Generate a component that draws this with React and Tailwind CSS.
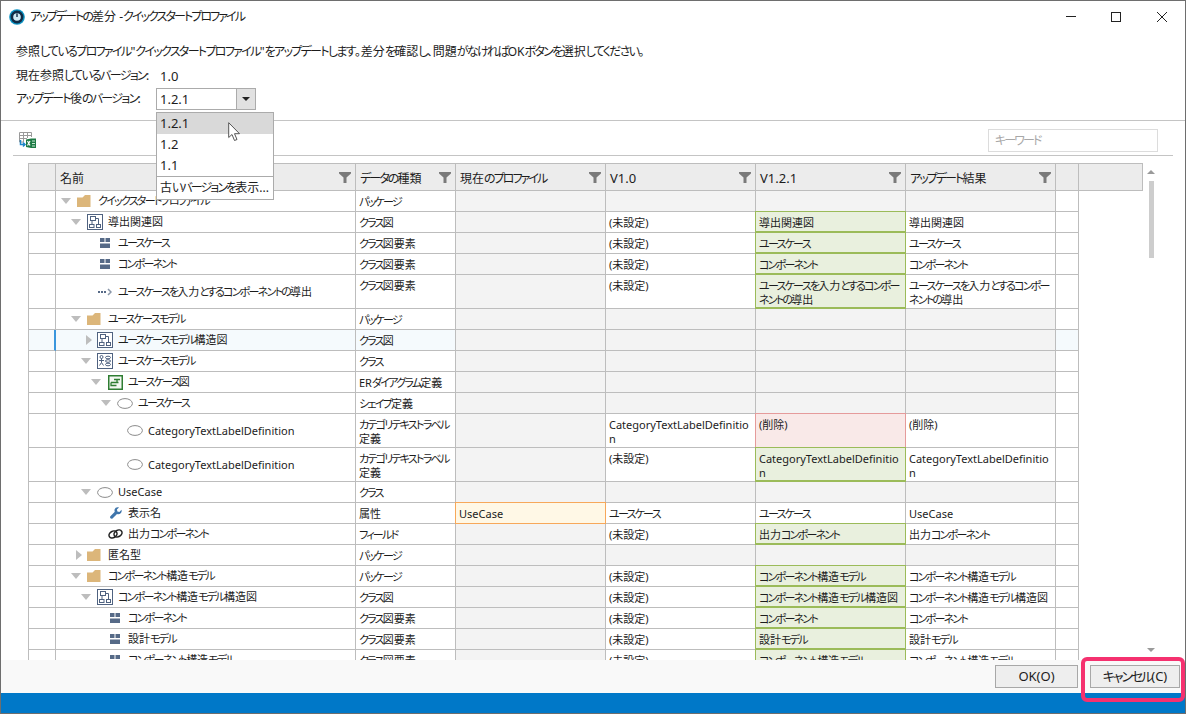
const COLS = ['w-[100px]', 'w-[150px]', 'w-[150px]', 'w-[150px]', 'w-[150px]'];

const INDENT = [
  'pl-[5px]',
  'pl-[15px]',
  'pl-[25px]',
  'pl-[35px]',
  'pl-[45px]',
  'pl-[55px]',
];

const UNSET = '(未設定)';
const CTLD = 'CategoryTextLabelDefinition';
const CTLD_WRAP = 'CategoryTextLabelDefinitio\nn';
const UC_LONG = 'ユースケースを入力とするコンポー\nネントの導出';

const g = (t) => ({ t, k: 'green' });

const ROWS = [
  { level: 0, arrow: 'down', icon: 'folder', name: 'クイックスタートプロファイル', type: 'パッケージ' },
  { level: 1, arrow: 'down', icon: 'diagram', name: '導出関連図', type: 'クラス図', v10: UNSET, v121: g('導出関連図'), res: '導出関連図' },
  { level: 2, icon: 'block', name: 'ユースケース', type: 'クラス図要素', v10: UNSET, v121: g('ユースケース'), res: 'ユースケース' },
  { level: 2, icon: 'block', name: 'コンポーネント', type: 'クラス図要素', v10: UNSET, v121: g('コンポーネント'), res: 'コンポーネント' },
  { level: 2, icon: 'dots', tall: true, name: 'ユースケースを入力とするコンポーネントの導出', type: 'クラス図要素', v10: UNSET, v121: g(UC_LONG), res: UC_LONG },
  { level: 1, arrow: 'down', icon: 'folder', name: 'ユースケースモデル', type: 'パッケージ' },
  { level: 2, arrow: 'right', icon: 'diagram', name: 'ユースケースモデル構造図', type: 'クラス図', selected: true },
  { level: 2, arrow: 'down', icon: 'classbox', name: 'ユースケースモデル', type: 'クラス' },
  { level: 3, arrow: 'down', icon: 'er', name: 'ユースケース図', type: 'ERダイアグラム定義' },
  { level: 4, arrow: 'down', icon: 'ellipse', name: 'ユースケース', type: 'シェイプ定義' },
  { level: 5, icon: 'ellipse', tall: true, name: CTLD, type: 'カテゴリテキストラベル\n定義', v10: CTLD_WRAP, v121: { t: '(削除)', k: 'red' }, res: '(削除)' },
  { level: 5, icon: 'ellipse', tall: true, name: CTLD, type: 'カテゴリテキストラベル\n定義', v10: UNSET, v121: g(CTLD_WRAP), res: CTLD_WRAP },
  { level: 2, arrow: 'down', icon: 'ellipse', name: 'UseCase', type: 'クラス' },
  { level: 3, icon: 'wrench', name: '表示名', type: '属性', cur: { t: 'UseCase', k: 'orange' }, v10: 'ユースケース', v121: 'ユースケース', res: 'UseCase' },
  { level: 3, icon: 'link', name: '出力コンポーネント', type: 'フィールド', v10: UNSET, v121: g('出力コンポーネント'), res: '出力コンポーネント' },
  { level: 1, arrow: 'right', icon: 'folder', name: '匿名型', type: 'パッケージ' },
  { level: 1, arrow: 'down', icon: 'folder', name: 'コンポーネント構造モデル', type: 'パッケージ', v10: UNSET, v121: g('コンポーネント構造モデル'), res: 'コンポーネント構造モデル' },
  { level: 2, arrow: 'down', icon: 'diagram', name: 'コンポーネント構造モデル構造図', type: 'クラス図', v10: UNSET, v121: g('コンポーネント構造モデル構造図'), res: 'コンポーネント構造モデル構造図' },
  { level: 3, icon: 'block', name: 'コンポーネント', type: 'クラス図要素', v10: UNSET, v121: g('コンポーネント'), res: 'コンポーネント' },
  { level: 3, icon: 'block', name: '設計モデル', type: 'クラス図要素', v10: UNSET, v121: g('設計モデル'), res: '設計モデル' },
  { level: 3, icon: 'block', name: 'コンポーネント構造モデル', type: 'クラス図要素', v10: UNSET, v121: g('コンポーネント構造モデル'), res: 'コンポーネント構造モデル' },
];

// the original UI font has narrow kana, so tighten only the kana runs
function Jp({ text, loose }) {
  return text.split(/([\u3040-\u30FF]+)/).map((part, i) =>
    i % 2 === 1 ? (
      <span key={i} className={loose ? 'tracking-[-0.14em]' : 'tracking-[-0.16em]'}>{part}</span>
    ) : (
      part
    )
  );
}

function Funnel() {
  return (
    <svg width="12" height="11" viewBox="0 0 12 11" className="shrink-0">
      <path d="M0 0H12V1.5L7.5 5.5V11H4.5V5.5L0 1.5Z" fill="#7a7a7a" />
    </svg>
  );
}

function TreeArrow({ dir }) {
  if (dir === 'down') {
    return (
      <svg width="10" height="6" viewBox="0 0 10 6">
        <path d="M0 0H10L5 6Z" fill="#bdbdbd" />
      </svg>
    );
  }
  return (
    <svg width="6" height="10" viewBox="0 0 6 10" className="ml-[5px]">
      <path d="M0 0L6 5L0 10Z" fill="#bdbdbd" />
    </svg>
  );
}

function TreeIcon({ name }) {
  if (name === 'folder') {
    return (
      <svg width="14" height="12" viewBox="0 0 14 12" className="-ml-px">
        <path d="M0 2.5H5.5L8 0H13.5V12H0Z" fill="#dcb67a" />
      </svg>
    );
  }
  if (name === 'diagram') {
    return (
      <svg width="16" height="16" viewBox="0 0 16 16" className="-ml-px">
        <rect x="0.5" y="0.5" width="15" height="15" fill="#fff" stroke="#4f6280" />
        <rect x="3.5" y="2.5" width="5" height="4" fill="none" stroke="#4f6280" />
        <rect x="2.5" y="10.5" width="4.5" height="3" fill="none" stroke="#4f6280" />
        <rect x="9.5" y="10.5" width="4" height="3" fill="none" stroke="#4f6280" />
        <path d="M5 6.5V10.5M8.5 4.5H11.5V10.5" fill="none" stroke="#4f6280" />
      </svg>
    );
  }
  if (name === 'classbox') {
    return (
      <svg width="16" height="16" viewBox="0 0 16 16" className="-ml-px">
        <rect x="0.5" y="0.5" width="15" height="15" fill="#fff" stroke="#4f6280" />
        <circle cx="4.5" cy="4" r="1.5" fill="none" stroke="#4f6280" />
        <path d="M2 7.5H7M4.5 5.5V9.5M2.5 12.5L4.5 9.5L6.5 12.5" fill="none" stroke="#4f6280" />
        <ellipse cx="11" cy="4.5" rx="2.5" ry="1.3" fill="none" stroke="#4f6280" />
        <ellipse cx="11" cy="8" rx="2.5" ry="1.3" fill="none" stroke="#4f6280" />
        <ellipse cx="11" cy="11.5" rx="2.5" ry="1.3" fill="none" stroke="#4f6280" />
      </svg>
    );
  }
  if (name === 'er') {
    return (
      <svg width="15" height="15" viewBox="0 0 15 15">
        <rect x="0.75" y="0.75" width="13.5" height="13.5" fill="#f4f8f2" stroke="#2f7d32" strokeWidth="1.5" />
        <path d="M6 4.5H12M9 4.5V7.5M3 7.5H10.5M3 7.5V10.5H8.5" fill="none" stroke="#2f7d32" strokeWidth="1.3" />
      </svg>
    );
  }
  if (name === 'block') {
    return (
      <svg width="10" height="10" viewBox="0 0 10 10" className="ml-[2px]">
        <path d="M0 0H4.5V4H0ZM5.5 0H10V4H5.5ZM0 5.5H10V10H0Z" fill="#566a87" />
      </svg>
    );
  }
  if (name === 'dots') {
    return (
      <svg width="14" height="8" viewBox="0 0 14 8">
        <path d="M0 3H2V5H0ZM3 3H5V5H3ZM6 3H8V5H6Z" fill="#566a87" />
        <path d="M10 1L13 4L10 7" fill="none" stroke="#8a97aa" strokeWidth="1.5" />
      </svg>
    );
  }
  if (name === 'ellipse') {
    return (
      <svg width="16" height="11" viewBox="0 0 16 11" className="-ml-px">
        <ellipse cx="8" cy="5.5" rx="7.4" ry="4.9" fill="#fff" stroke="#8a8a8a" />
      </svg>
    );
  }
  if (name === 'wrench') {
    return (
      <svg width="12" height="12" viewBox="0 0 12 12" className="ml-[2px]">
        <path d="M11.5 2.8L9.4 4.9L7.4 4.4L6.9 2.4L9 0.4C7.2 -0.3 5 0.5 4.6 2.6C4.4 3.4 4.5 4.1 4.8 4.8L0.4 9.2C-0.1 9.8 -0.1 10.7 0.5 11.3C1 11.8 1.9 11.9 2.5 11.4L7 6.9C9.6 8 12.4 5.8 11.5 2.8Z" fill="#3f75ab" />
      </svg>
    );
  }
  return (
    <svg width="15" height="10" viewBox="0 0 15 10">
      <g fill="none" stroke="#222" strokeWidth="1.5">
        <ellipse cx="5" cy="5.5" rx="4.2" ry="3.2" transform="rotate(-30 5 5.5)" />
        <ellipse cx="10" cy="4.5" rx="4.2" ry="3.2" transform="rotate(-30 10 4.5)" />
      </g>
    </svg>
  );
}

function ValueCell({ width, value }) {
  const base = `${width} shrink-0 whitespace-pre-line leading-[14px] border-[#bdbdbd]`;
  if (value == null) return <div className={`${base} border-r border-b bg-[#f3f3f3]`} />;
  if (typeof value === 'string') {
    return <div className={`${base} border-r border-b pl-[3px] pt-[3.5px] bg-white`}><Jp text={value} /></div>;
  }
  const tone = {
    green: 'bg-[#e9f0de] border-[#9bbb59] border-b-2',
    red: 'bg-[#f9e9e8] border-[#e59b9b]',
    orange: 'bg-[#fff8e6] border-[#f7a85a]',
  }[value.k];
  return (
    <div className={`w-[151px] shrink-0 -ml-px -mt-px border ${tone} pl-[3px] pt-[3.5px] whitespace-pre-line leading-[14px] relative`}>
      <Jp text={value.t} />
    </div>
  );
}

function Row({ row }) {
  return (
    <div className={`flex ${row.tall ? 'h-[34px]' : 'h-[21px]'} ${row.selected ? 'bg-[#f5fafd]' : 'bg-white'} text-[11px]`}>
      <div className={`w-[28px] shrink-0 border-l border-b border-[#bdbdbd] ${row.selected ? 'border-r-2 border-r-[#3a96dd]' : 'border-r'}`} />
      <div className={`w-[300px] shrink-0 border-r border-b border-[#bdbdbd] flex items-center ${INDENT[row.level]}`}>
        <span className="w-[17px] shrink-0 flex items-center">{row.arrow && <TreeArrow dir={row.arrow} />}</span>
        <span className="w-[20px] shrink-0 flex items-center"><TreeIcon name={row.icon} /></span>
        <span className="whitespace-nowrap pt-px"><Jp text={row.name} /></span>
      </div>
      <div className={`${COLS[0]} shrink-0 border-r border-b border-[#bdbdbd] pl-[3px] pt-[3.5px] whitespace-pre-line leading-[14px]`}><Jp text={row.type} /></div>
      <ValueCell width={COLS[1]} value={row.cur} />
      <ValueCell width={COLS[2]} value={row.v10} />
      <ValueCell width={COLS[3]} value={row.v121} />
      <ValueCell width={COLS[4]} value={row.res} />
      <div className="w-[23px] shrink-0 border-r border-b border-[#bdbdbd]" />
    </div>
  );
}

function HeaderCell({ label, className, latin }) {
  return (
    <div className={`${className} shrink-0 border-r border-[#bdbdbd] flex items-center justify-between pl-[4px] pr-[4px]`}>
      <span className={`whitespace-nowrap pt-[3px] ${latin ? 'text-[13px]' : ''}`}><Jp text={label} /></span>
      <Funnel />
    </div>
  );
}

function AppIcon() {
  return (
    <svg width="16" height="16" viewBox="0 0 16 16">
      <circle cx="8" cy="8" r="7.8" fill="#0b93c4" />
      <circle cx="8" cy="8" r="6.4" fill="#0f2b46" />
      <circle cx="8" cy="8" r="3.8" fill="#cfeaf5" />
      <path d="M8 4.5V8" stroke="#0f2b46" strokeWidth="1.4" />
    </svg>
  );
}

function ExcelIcon() {
  return (
    <svg width="17" height="16" viewBox="0 0 17 16">
      <g fill="none" stroke="#9a9a9a">
        <path d="M0.5 0.5H12.5V5M0.5 0.5V10H4M0.5 3.5H12.5M0.5 6.5H8M4.5 0.5V10M8.5 0.5V6" />
      </g>
      <path d="M1.5 8V12.5H6M4 10.5L6 12.5L4 14.5" fill="none" stroke="#1f86c9" strokeWidth="1.5" />
      <path d="M7 7.5L12 6.5H17V16H12L7 15Z" fill="#1e7a45" />
      <path d="M8.5 9L11 13.5M11 9L8.5 13.5" stroke="#fff" strokeWidth="1.2" />
      <path d="M13 9H16M13 11.5H16M13 14H16" stroke="#c6e5d2" />
    </svg>
  );
}

export default function App() {
  return (
    <div className="w-[1186px] h-[714px] relative overflow-hidden flex flex-col bg-white border border-[#6e6e6e] text-[12px] text-[#1c1c1c] font-['Noto_Sans','Noto_Sans_CJK_JP',sans-serif] [font-feature-settings:'palt']">
      {/* title bar */}
      <div className="h-[31px] shrink-0 flex items-center pl-[8px]">
        <AppIcon />
        <span className="ml-[5px]"><Jp text="アップデートの差分 -クイックスタートプロファイル" /></span>
        <div className="ml-auto flex items-center">
          <div className="w-[10px] h-px bg-[#222] mr-[35px]" />
          <div className="w-[10px] h-[10px] border border-[#222] mr-[36px]" />
          <svg width="10" height="10" viewBox="0 0 10 10" className="mr-[18px]">
            <path d="M0 0L10 10M10 0L0 10" stroke="#222" />
          </svg>
        </div>
      </div>

      {/* version info */}
      <div className="h-[89px] shrink-0 border-b border-[#c4c4c4] pl-[15px] pt-[10px] flex flex-col">
        <div className="h-[20px] leading-[20px]"><Jp loose text={'参照しているプロファイル"クイックスタートプロファイル"をアップデートします。差分を確認し、問題がなければOKボタンを選択してください。'} /></div>
        <div className="h-[20px] leading-[20px] mt-[4px] flex">
          <span className="w-[140px]"><Jp loose text="現在参照しているバージョン:" /></span>
          <span className="pl-[4px] text-[13px]">1.0</span>
        </div>
        <div className="h-[22px] mt-[2px] flex items-center">
          <span className="w-[140px]"><Jp loose text="アップデート後のバージョン:" /></span>
          <div className="w-[100px] h-[22px] border border-[#ababab] flex">
            <span className="flex-1 pl-[3px] leading-[20px] text-[13px]">1.2.1</span>
            <div className="w-[19px] bg-[#e1e1e1] border-l border-[#ababab] flex items-center justify-center">
              <svg width="8" height="4" viewBox="0 0 8 4"><path d="M0 0H8L4 4Z" fill="#222" /></svg>
            </div>
          </div>
        </div>
      </div>

      {/* toolbar */}
      <div className="h-[35px] shrink-0 mx-[12px] border-b border-[#c4c4c4] flex items-center justify-between pl-[6px] pr-[15px] pt-[4px]">
        <ExcelIcon />
        <input
          readOnly
          placeholder="キーワード"
          className="w-[170px] h-[23px] border border-[#dcdcdc] px-[6px] outline-none placeholder:text-[#a8a8a8] placeholder:tracking-[-0.16em]"
        />
      </div>

      {/* grid + scrollbar */}
      <div className="flex-1 min-h-0 mt-[7px] flex overflow-hidden">
        <div className="ml-[27px] w-[1115px] shrink-0">
          <div className="h-[28px] flex bg-[#ececec] border-l border-t border-b border-r border-[#bdbdbd]">
            <div className="w-[27px] shrink-0 border-r border-[#bdbdbd]" />
            <HeaderCell label="名前" className="w-[300px]" />
            <HeaderCell label="データの種類" className="w-[100px]" />
            <HeaderCell label="現在のプロファイル" className="w-[150px]" />
            <HeaderCell label="V1.0" latin className="w-[150px]" />
            <HeaderCell label="V1.2.1" latin className="w-[150px]" />
            <HeaderCell label="アップデート結果" className="w-[150px]" />
            <div className="w-[23px] shrink-0 border-r border-[#bdbdbd]" />
          </div>
          <div className="w-[1051px]">
            {ROWS.map((row, i) => (
              <Row key={i} row={row} />
            ))}
          </div>
        </div>
        <div className="ml-[4px] w-[8px] shrink-0 flex flex-col items-center">
          <svg width="8" height="4" viewBox="0 0 8 4" className="mt-[7px]"><path d="M0 4H8L4 0Z" fill="#9a9a9a" /></svg>
          <div className="w-[5px] h-[77px] mt-[7px] bg-[#cdcdcd]" />
          <svg width="8" height="4" viewBox="0 0 8 4" className="mt-auto mb-[8px]"><path d="M0 0H8L4 4Z" fill="#9a9a9a" /></svg>
        </div>
      </div>

      {/* footer */}
      <div className="h-[33px] shrink-0 bg-[#f9f9f9] flex items-center justify-end pr-[5px] gap-[12px] text-[13px]">
        <button className="w-[83px] h-[23px] bg-[#eeeeee] border border-[#a8a8a8]">OK(O)</button>
        <button className="w-[90px] h-[23px] bg-[#eeeeee] border border-[#a8a8a8]"><Jp text="キャンセル(C)" /></button>
      </div>
      <div className="h-[20px] shrink-0 bg-[#0078c8]" />

      {/* open dropdown */}
      <div className="absolute left-[155px] top-[111px] w-[118px] h-[88px] bg-white border border-[#ababab] flex flex-col">
        <div className="h-[21px] bg-[#d9d9d9] pl-[3px] leading-[21px] text-[13px]">1.2.1</div>
        <div className="h-[21px] pl-[3px] leading-[21px] text-[13px]">1.2</div>
        <div className="h-[21px] pl-[3px] leading-[21px] text-[13px]">1.1</div>
        <div className="flex-1 border-t border-[#ababab] pl-[3px] leading-[22px] whitespace-nowrap"><Jp text="古いバージョンを表示..." /></div>
      </div>

      {/* mouse pointer */}
      <svg width="13" height="20" viewBox="0 0 13 20" className="absolute left-[227px] top-[121px]">
        <path d="M0.7 0.7V15.5L4 12.5L6.5 18.5L9 17.5L6.5 11.7H11.5Z" fill="#fff" stroke="#555" strokeWidth="1" />
      </svg>

      {/* annotation */}
      <div className="absolute left-[1080px] top-[656px] w-[104px] h-[45px] border-4 border-[#f5316f] rounded-[6px]" />
    </div>
  );
}
